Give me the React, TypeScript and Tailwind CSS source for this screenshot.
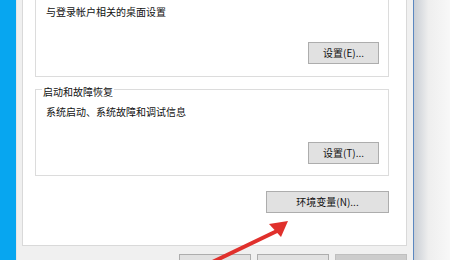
import React from "react";

const font = { fontFamily: '"Noto Sans CJK SC", "Noto Sans", sans-serif' };

function Btn({ label, className }: { label: string; className?: string }) {
  return (
    <div
      className={
        "flex h-[22px] items-center justify-center border border-[#adadad] bg-[#e1e1e1] text-[10px] leading-[14px] text-[#111] " +
        (className ?? "")
      }
    >
      {label}
    </div>
  );
}

export default function App() {
  return (
    <div
      className="relative flex h-[260px] w-[450px] overflow-hidden bg-white"
      style={font}
    >
      {/* desktop blue strip */}
      <div className="h-full w-[16px] shrink-0 bg-[#07a6f0]" />

      {/* dialog window */}
      <div className="flex h-full w-[398px] shrink-0 flex-col border-r border-r-[#5b87c0] border-l border-l-[#e6e6e6] bg-[#f0f0f0] pl-[5px] pr-[6px]">
        {/* tab page */}
        <div className="flex h-[246px] w-[385px] shrink-0 flex-col border-x border-b border-[#d9d9d9] bg-white pl-[12px] pr-[17px]">
          {/* group 1 (top cut off) */}
          <div className="flex h-[77px] shrink-0 flex-col border-x border-b border-[#dcdcdc] pl-[10px] pr-[9px]">
            <div className="pt-[5px] text-[10px] leading-[14px] text-[#111]">
              与登录帐户相关的桌面设置
            </div>
            <div className="mt-[23px] flex justify-end">
              <Btn label="设置(E)..." className="w-[71px]" />
            </div>
          </div>

          {/* group 2 */}
          <fieldset className="mt-[2px] border border-[#dcdcdc] pb-[11px] pl-[10px] pr-[9px]">
            <legend className="-ml-[4px] px-[1px] pt-[6px] text-[10px] leading-[14px] text-[#111]">
              启动和故障恢复
            </legend>
            <div className="mt-[6px] text-[10px] leading-[14px] text-[#111]">
              系统启动、系统故障和调试信息
            </div>
            <div className="mt-[23px] flex justify-end">
              <Btn label="设置(T)..." className="w-[71px]" />
            </div>
          </fieldset>

          <div className="mt-[15px] flex justify-end">
            <Btn label="环境变量(N)..." className="w-[123px]" />
          </div>
        </div>

        {/* bottom buttons (labels fall below the visible area) */}
        <div className="mt-[8px] flex justify-end gap-[6px]">
          <div className="h-[22px] w-[72px] border border-[#adadad] bg-[#e1e1e1]" />
          <div className="h-[22px] w-[72px] border border-[#adadad] bg-[#e1e1e1]" />
          <div className="h-[22px] w-[72px] border border-[#bfbfbf] bg-[#cccccc]" />
        </div>
      </div>

      {/* background window edge */}
      <div className="h-full flex-1 bg-linear-to-r from-[#c9ced5] via-[#eeeeee] via-40% to-[#f8f8f8]" />

      {/* red arrow annotation */}
      <svg
        className="pointer-events-none absolute left-0 top-0"
        width="450"
        height="260"
        viewBox="0 0 450 260"
      >
        <path d="M200 268 L277 231" stroke="#e0302c" strokeWidth="4" strokeLinecap="round" />
        <polygon points="288,221 269,224 281,237" fill="#e0302c" />
      </svg>
    </div>
  );
}
